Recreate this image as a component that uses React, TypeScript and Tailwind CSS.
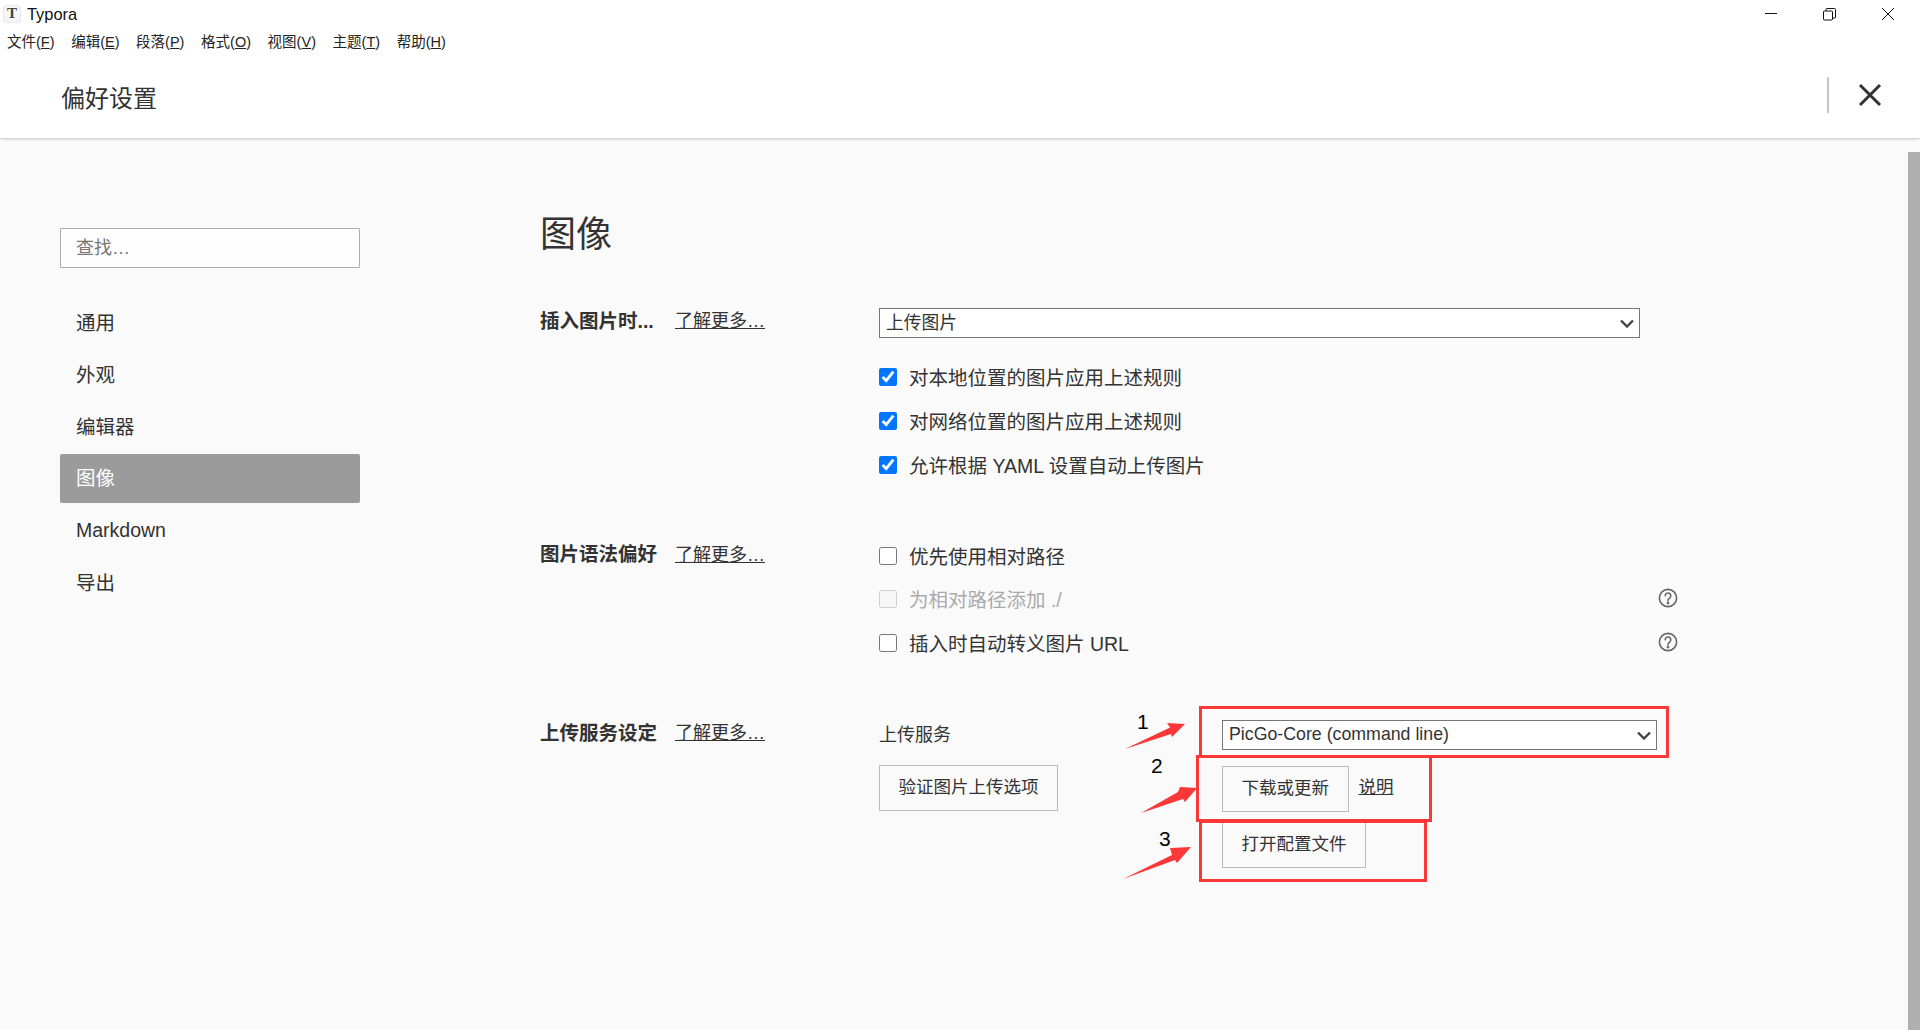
const FONT = "font-['Liberation_Sans','Noto_Sans_CJK_SC',sans-serif]";

const menus = [
  { label: '文件', key: 'F' },
  { label: '编辑', key: 'E' },
  { label: '段落', key: 'P' },
  { label: '格式', key: 'O' },
  { label: '视图', key: 'V' },
  { label: '主题', key: 'T' },
  { label: '帮助', key: 'H' },
];

const navItems = ['通用', '外观', '编辑器', '图像', 'Markdown', '导出'];

function TitleBar() {
  return (
    <div className="flex h-[28px] items-center justify-between">
      <div className="flex items-center pl-[3px]">
        <div className="flex h-[18px] w-[18px] items-center justify-center rounded-[3px] border border-[#e8e8e8] bg-[#f6f6f6] font-['Liberation_Serif',serif] text-[15px] font-bold leading-none text-[#444]">
          T
        </div>
        <span className="ml-[6px] text-[16.4px] text-[#111]">Typora</span>
      </div>
      <div className="flex items-center">
        <svg width="14" height="14" viewBox="0 0 14 14" className="mr-[45px]" fill="none" stroke="#111" strokeWidth="1">
          <path d="M1 6.5h12" />
        </svg>
        <svg width="13" height="14" viewBox="0 0 13 14" className="mr-[45px]" fill="none" stroke="#111" strokeWidth="1">
          <rect x="0.5" y="4" width="9" height="9" rx="1" />
          <path d="M3 4V2.5a1 1 0 0 1 1-1h7.5a1 1 0 0 1 1 1V10a1 1 0 0 1-1 1H9.5" />
        </svg>
        <svg width="14" height="14" viewBox="0 0 14 14" className="mr-[25px]" fill="none" stroke="#111" strokeWidth="1">
          <path d="M1 1l12 12M13 1L1 13" />
        </svg>
      </div>
    </div>
  );
}

function Header() {
  return (
    <header className="relative z-10 h-[138px] shrink-0 bg-white shadow-[0_1px_3px_rgba(0,0,0,0.22)]">
      <TitleBar />
      <nav className="flex h-[28px] items-center gap-[16.6px] pl-[7px] pt-[2px] text-[14.5px] text-[#222]">
        {menus.map((m) => (
          <span key={m.key}>
            {m.label}(<span className="underline">{m.key}</span>)
          </span>
        ))}
      </nav>
      <div className="flex h-[82px] items-center justify-between pb-[4px] pl-[61px]">
        <h1 className="mt-[7px] text-[24px] font-normal text-[#333]">偏好设置</h1>
        <div className="flex items-center">
          <div className="h-[36px] w-[2px] bg-[#c4c4c4]" />
          <svg width="24" height="24" viewBox="0 0 24 24" className="mb-[1px] ml-[29px] mr-[38px]" fill="none" stroke="#333" strokeWidth="3">
            <path d="M2 2l20 20M22 2L2 22" />
          </svg>
        </div>
      </div>
    </header>
  );
}

function Sidebar() {
  return (
    <aside className="w-[300px] shrink-0 pt-[90px]">
      <input
        placeholder="查找…"
        className="block h-[40px] w-full rounded-[1px] border border-[#aaa] bg-[#fdfdfd] px-[15px] text-[18px] text-[#333] placeholder:text-[#777] focus:outline-none"
      />
      <ul className="mt-[29px] text-[19.5px] text-[#333]">
        {navItems.map((item) => (
          <li
            key={item}
            className={
              item === '图像'
                ? 'mb-[2px] flex h-[49px] items-center rounded-[2px] bg-[#9b9b9b] pl-[16px] text-white'
                : 'flex h-[52.3px] items-center pl-[16px]'
            }
          >
            {item}
          </li>
        ))}
      </ul>
    </aside>
  );
}

function Label({ text }: { text: string }) {
  return (
    <div className="flex w-[339px] shrink-0 items-center">
      <span className="w-[135px] text-[19.5px] font-bold text-[#333]">{text}</span>
      <span className="text-[18px] text-[#333] underline">了解更多…</span>
    </div>
  );
}

function CheckRow({ text, checked, disabled, help, tight }: { text: string; checked?: boolean; disabled?: boolean; help?: boolean; tight?: boolean }) {
  return (
    <div className={tight ? 'flex h-[43.5px] w-[799px] items-center justify-between' : 'flex h-[44px] w-[799px] items-center justify-between'}>
      <label className={disabled ? 'flex items-center text-[19.5px] text-[#aaa]' : 'flex items-center text-[19.5px] text-[#333]'}>
        <input type="checkbox" defaultChecked={checked} disabled={disabled} className="m-0 h-[18px] w-[18px]" />
        <span className="ml-[12px] pt-[3px]">{text}</span>
      </label>
      {help && (
        <svg width="20" height="20" viewBox="0 0 20 20" className="mb-[2px]" fill="none" stroke="#666" strokeWidth="1.6">
          <circle cx="10" cy="10" r="8.6" />
          <path d="M7.2 7.8a2.8 2.8 0 1 1 4.4 2.3c-1 .7-1.6 1.2-1.6 2.4" strokeLinecap="round" />
          <circle cx="10" cy="15" r="0.6" fill="#666" />
        </svg>
      )}
    </div>
  );
}

function Select({ value, width }: { value: string; width: string }) {
  return (
    <div className={`relative ${width}`}>
      <select className="block h-[30px] w-full appearance-none border border-[#767676] bg-white pl-[6px] text-[17.75px] text-[#333]">
        <option>{value}</option>
      </select>
      <svg width="14" height="9" viewBox="0 0 14 9" className="absolute right-[6px] top-[11px]" fill="none" stroke="#444" strokeWidth="2.4">
        <path d="M1 1.5l6 6 6-6" />
      </svg>
    </div>
  );
}

function Button({ children }: { children: string }) {
  return (
    <button className="h-[46px] border border-[#bbb] bg-transparent px-[18.5px] text-[17.5px] text-[#333]">
      {children}
    </button>
  );
}

function Main() {
  return (
    <main className="ml-[180px] flex-1 pt-[75px]">
      <h2 className="text-[36px] font-normal leading-[44px] text-[#333]">图像</h2>

      <section className="mt-[51px] flex">
        <div className="flex h-[27px] items-center"><Label text="插入图片时..." /></div>
        <div>
          <Select value="上传图片" width="w-[761px]" />
          <div className="mt-[17px]">
            <CheckRow text="对本地位置的图片应用上述规则" checked />
            <CheckRow text="对网络位置的图片应用上述规则" checked />
            <CheckRow text="允许根据 YAML 设置自动上传图片" checked />
          </div>
        </div>
      </section>

      <section className="mt-[47px] flex">
        <div className="flex h-[42px] items-center"><Label text="图片语法偏好" /></div>
        <div>
          <CheckRow tight text="优先使用相对路径" />
          <CheckRow tight text="为相对路径添加 ./" disabled help />
          <CheckRow tight text="插入时自动转义图片 URL" help />
        </div>
      </section>

      <section className="mt-[55px] flex">
        <div className="flex h-[28px] items-center"><Label text="上传服务设定" /></div>
        <div className="w-[343px] shrink-0">
          <div className="flex h-[32px] items-center text-[18px] text-[#333]">上传服务</div>
          <div className="mt-[13px]"><Button>验证图片上传选项</Button></div>
        </div>
        <div>
          <Select value="PicGo-Core (command line)" width="w-[435px]" />
          <div className="mt-[16px] flex items-center">
            <Button>下载或更新</Button>
            <span className="ml-[10px] pb-[2px] text-[17.5px] text-[#333] underline">说明</span>
          </div>
          <div className="mt-[10px]"><Button>打开配置文件</Button></div>
        </div>
      </section>
    </main>
  );
}

// red marks drawn on top of the screenshot
function Annotations() {
  return (
    <div className="pointer-events-none absolute inset-0">
      <div className="absolute left-[1199px] top-[706px] h-[52px] w-[470px] border-[3.5px] border-[#fb3838]" />
      <div className="absolute left-[1196px] top-[755px] h-[67px] w-[236px] border-[3.5px] border-[#fb3838]" />
      <div className="absolute left-[1199px] top-[820px] h-[62px] w-[228px] border-[3.5px] border-[#fb3838]" />
      <svg width="1920" height="1030" className="absolute left-0 top-0" fill="#fb3838">
        <path d="M1125 749L1170 727.5L1167 723L1185 724L1172 737L1171 734Z" />
        <path d="M1141 813L1178 792L1180 787L1197 788L1185 802L1183 799Z" />
        <path d="M1123 879L1172 855L1170 848L1191 847L1177 863L1175 860Z" />
      </svg>
      <span className="absolute left-[1137px] top-[710px] text-[21px] leading-[24px] text-black">1</span>
      <span className="absolute left-[1151px] top-[754px] text-[21px] leading-[24px] text-black">2</span>
      <span className="absolute left-[1159px] top-[827px] text-[21px] leading-[24px] text-black">3</span>
    </div>
  );
}

export default function App() {
  return (
    <div className={`${FONT} relative flex h-[1030px] w-[1920px] flex-col overflow-hidden bg-[#fafafa]`}>
      <Header />
      <div className="flex flex-1">
        <div className="flex flex-1 pl-[60px]">
          <Sidebar />
          <Main />
        </div>
        <div className="mt-[14px] w-[12px] bg-[#b0b0b0]" />
      </div>
      <Annotations />
    </div>
  );
}
